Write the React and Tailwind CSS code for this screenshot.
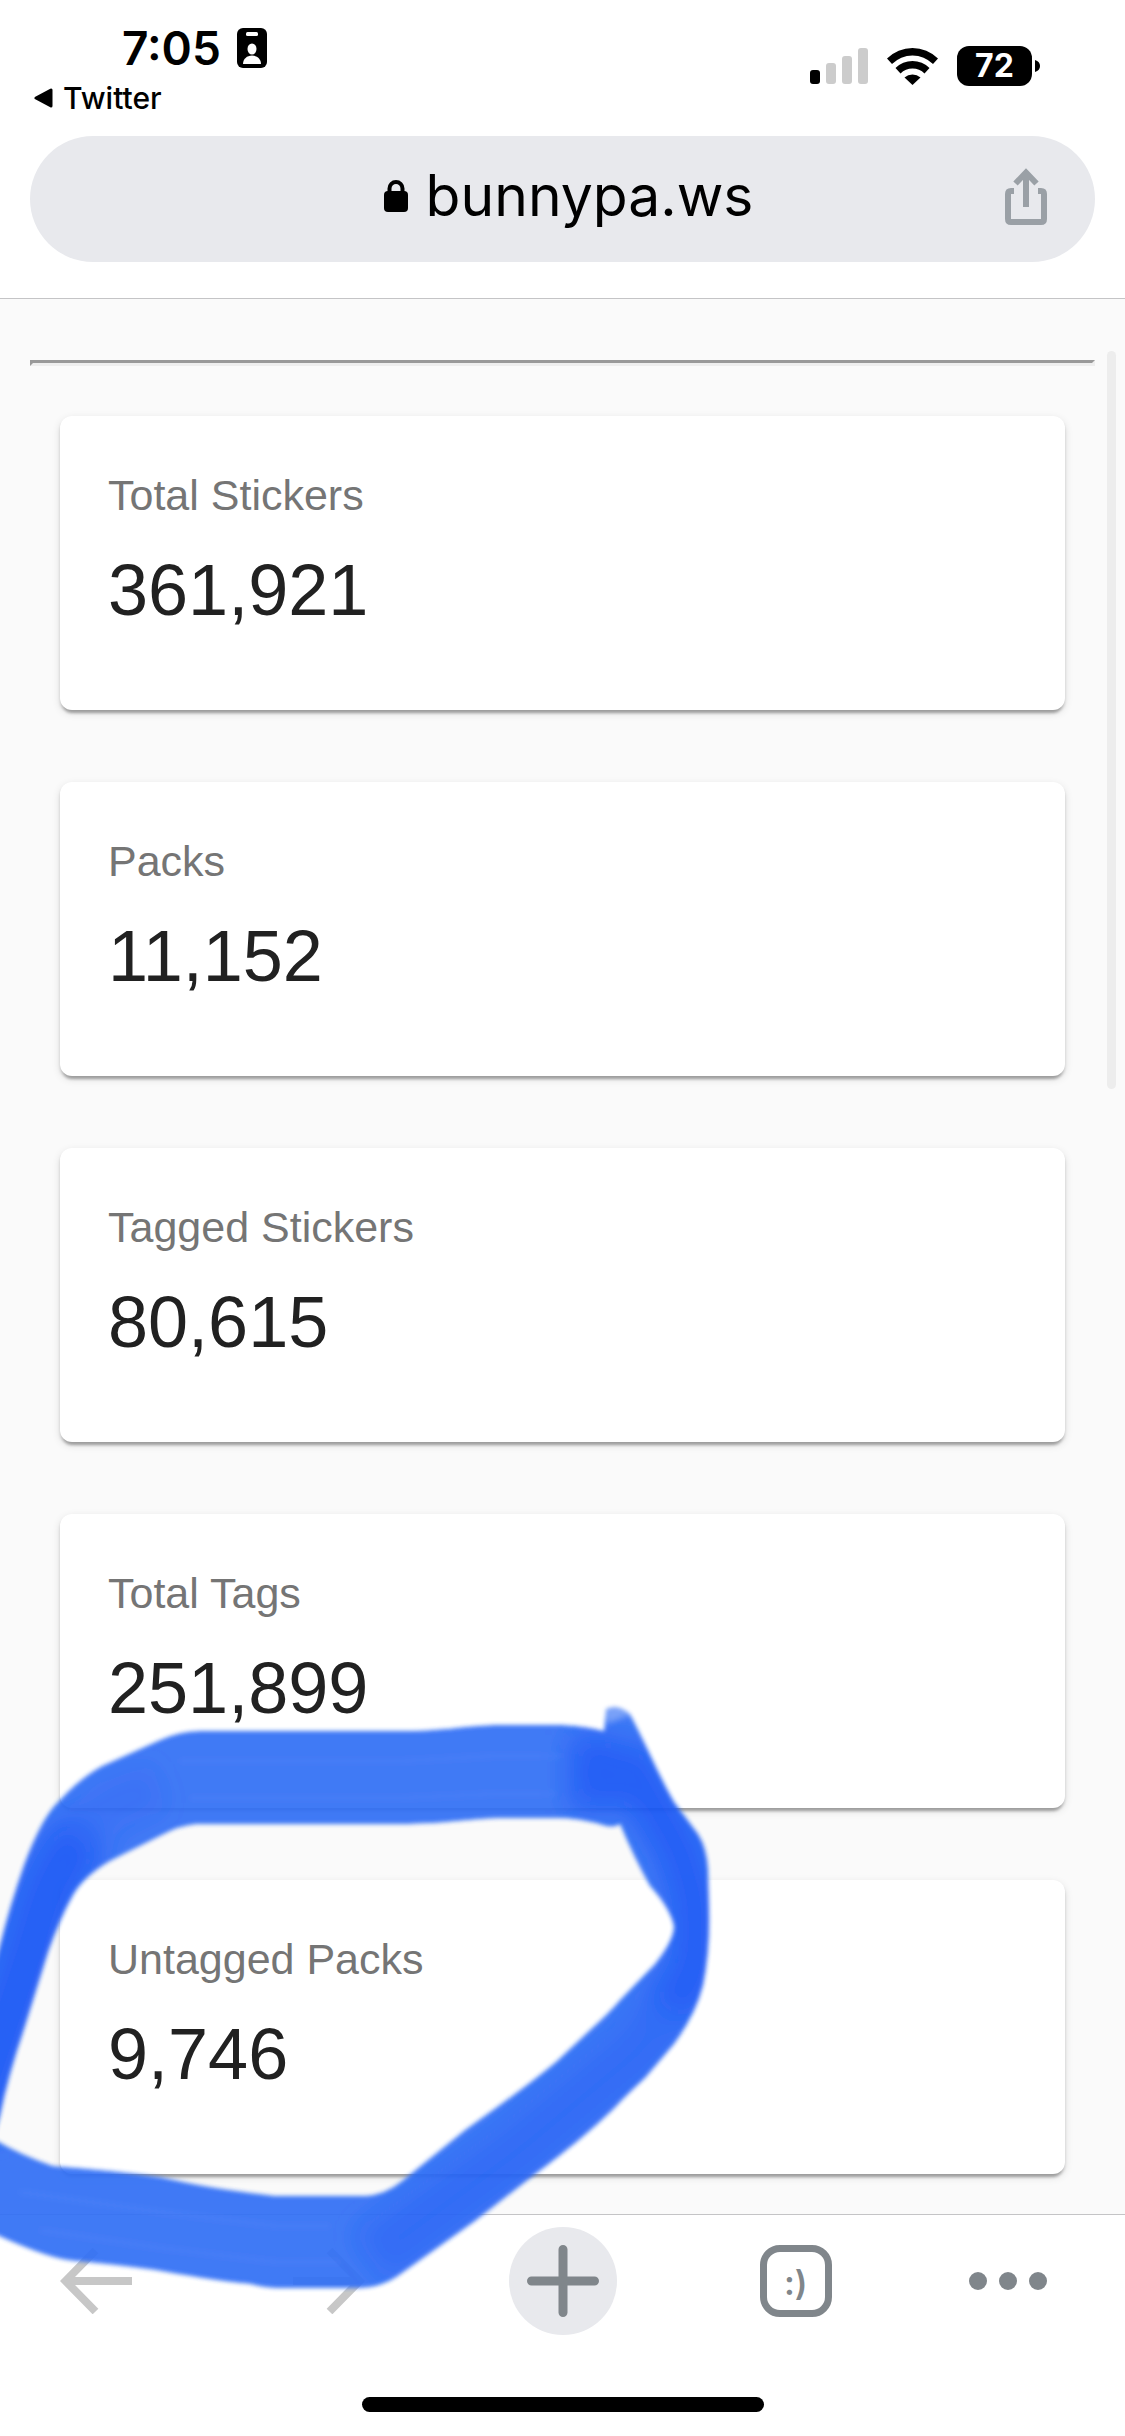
import React from "react";

const stats = [
  { label: "Total Stickers", value: "361,921" },
  { label: "Packs", value: "11,152" },
  { label: "Tagged Stickers", value: "80,615" },
  { label: "Total Tags", value: "251,899" },
  { label: "Untagged Packs", value: "9,746" },
];

function StatusBar() {
  return (
    <div className="flex h-[136px] justify-between pt-6 pr-[85px] pl-[34px]">
      <div className="flex flex-col">
        <div className="flex items-center gap-4 pl-[88px]">
          <span className="text-[46px] leading-[48px] font-semibold">7:05</span>
          <svg width="30" height="40" viewBox="0 0 30 40" aria-hidden="true">
            <rect width="30" height="40" rx="6" fill="#000" />
            <rect x="9" y="4" width="12" height="4" rx="1.5" fill="#fff" />
            <ellipse cx="15" cy="21" rx="4.5" ry="5.5" fill="#fff" />
            <path d="M6 36c0-5 4-8.500 9-8.500s9 3.500 9 8.500z" fill="#fff" />
          </svg>
        </div>
        <a href="#twitter" className="mt-2 flex items-center gap-2.5 text-[30px] leading-[36px] font-medium">
          <svg width="19" height="20" viewBox="0 0 19 20" aria-hidden="true">
            <path d="M17 2v16L2 10z" fill="#000" stroke="#000" strokeWidth="3" strokeLinejoin="round" />
          </svg>
          Twitter
        </a>
      </div>
      <div className="mt-[22px] flex h-10 items-center gap-[19px]">
        <svg width="58" height="36" viewBox="0 0 58 36" aria-hidden="true">
          <rect x="0" y="22" width="10" height="14" rx="3" fill="#000" />
          <rect x="16" y="15" width="10" height="21" rx="3" fill="#ccc" />
          <rect x="32" y="8" width="10" height="28" rx="3" fill="#ccc" />
          <rect x="48" y="0" width="10" height="36" rx="3" fill="#ccc" />
        </svg>
        <svg width="51" height="38" viewBox="0 0 51 38" aria-hidden="true">
          <path d="M0 11.500a36 36 0 0 1 51 0l-5 5.500a29 29 0 0 0-41 0z" />
          <path d="M8.500 21a24 24 0 0 1 34 0l-5 5.500a17 17 0 0 0-24 0z" />
          <path d="M17.500 30.500a12 12 0 0 1 16 0l-8 7.500z" />
        </svg>
        <div className="flex items-center gap-[3px]">
          <span className="flex h-10 w-[75px] items-center justify-center rounded-[12px] bg-black text-[32px] leading-10 font-bold text-white">72</span>
          <svg width="5" height="12" viewBox="0 0 5 12" aria-hidden="true">
            <path d="M0 0q5 1.500 5 6t-5 6z" />
          </svg>
        </div>
      </div>
    </div>
  );
}

function AddressBar() {
  return (
    <div className="mx-[30px] flex h-[126px] items-center rounded-full bg-[#e8e9ed] pr-12 pb-1.5">
      <button type="button" className="ml-[102px] flex flex-1 items-center justify-center gap-[18px] text-[57px] leading-[72px] text-black">
        <svg width="24" height="32" viewBox="0 0 24 32" aria-hidden="true">
          <rect x="0" y="11" width="24" height="21" rx="4" />
          <path d="M5.500 13V8.500a6.500 6.500 0 0 1 13 0V13" fill="none" stroke="#000" strokeWidth="4" />
        </svg>
        bunnypa.ws
      </button>
      <button type="button" aria-label="Share">
        <svg width="42" height="58" viewBox="0 0 42 58" fill="none" stroke="#9aa0a6" strokeWidth="6">
          <path d="M9 24H6q-3 0-3 3v25q0 3 3 3h30q3 0 3-3V27q0-3-3-3h-3" />
          <path d="M21 40V5M10.500 16.500L21 5.500l10.500 11" />
        </svg>
      </button>
    </div>
  );
}

function StatCard({ label, value }) {
  return (
    <section className="rounded-[12px] bg-white px-12 pt-[49px] pb-[72px] shadow-[0_6px_3px_-3px_rgba(0,0,0,0.2),0_3px_3px_0_rgba(0,0,0,0.14),0_3px_9px_0_rgba(0,0,0,0.12)]">
      <h2 className="text-[43px] leading-[60px] text-[#757575]">{label}</h2>
      <p className="mt-[17px] text-[72px] leading-[96px] text-[#212121]">{value}</p>
    </section>
  );
}

function Toolbar() {
  return (
    <nav className="border-t border-[#c4c4c6] bg-white pt-3 pb-6">
      <div className="flex items-center justify-between pr-[84px] pl-[42px]">
        <button type="button" aria-label="Back" className="flex size-[108px] items-center justify-center">
          <svg width="72" height="66" viewBox="0 0 72 66" fill="none" stroke="#c7c7c7" strokeWidth="8">
            <path d="M72 33H6M35.500 2.500L5.500 33l30 30.500" />
          </svg>
        </button>
        <button type="button" aria-label="Forward" className="flex size-[108px] items-center justify-center">
          <svg width="72" height="66" viewBox="0 0 72 66" fill="none" stroke="#c7c7c7" strokeWidth="8">
            <path d="M0 33h66M36.500 2.500L66.500 33l-30 30.500" />
          </svg>
        </button>
        <button type="button" aria-label="New tab" className="flex size-[108px] items-center justify-center rounded-full bg-[#e8e9ed]">
          <svg width="72" height="72" viewBox="0 0 72 72" stroke="#80868b" strokeWidth="9" strokeLinecap="round">
            <path d="M4.500 36h63M36 4.500v63" />
          </svg>
        </button>
        <button type="button" aria-label="Tabs" className="flex size-[108px] items-center justify-center">
          <span className="flex size-[72px] items-center justify-center rounded-[20px] border-[7px] border-[#80868b] pt-1 text-[34px] leading-[36px] font-semibold text-[#80868b]">:)</span>
        </button>
        <button type="button" aria-label="More" className="-mx-1.5 flex h-[108px] w-[78px] items-center justify-center">
          <svg width="78" height="18" viewBox="0 0 78 18" fill="#80868b">
            <circle cx="9" cy="9" r="9" />
            <circle cx="39" cy="9" r="9" />
            <circle cx="69" cy="9" r="9" />
          </svg>
        </button>
      </div>
      <div className="mx-auto mt-[62px] h-[15px] w-[402px] rounded-full bg-black" />
    </nav>
  );
}

function MarkerStroke() {
  const outline =
    "M606 1709Q618 1703 630 1714C646 1744 660 1778 674 1802L698 1834Q707 1848 708 1870L709 1911Q710 1950 703 1985Q696 2014 674 2044L645 2078Q634 2088 622 2100C600 2124 565 2152 538 2172L475 2221L402 2273Q382 2288 360 2288H276Q265 2288 250 2284C215 2281 185 2275 155 2270Q110 2264 75 2261Q50 2260 -10 2232V2137Q20 2155 53 2166Q110 2170 160 2177C200 2186 240 2192 276 2196H364Q385 2195 402 2181L465 2130Q530 2084 557 2061L590 2030Q610 2012 620 2000L655 1964Q674 1940 674 1926Q670 1908 650 1886Q634 1858 620 1824Q615 1828 606 1826Q580 1818 557 1818H500C460 1820 440 1824 402 1824H198Q180 1825 160 1836L110 1861Q84 1876 73 1895Q60 1918 48 1952L24 2029Q8 2076 0 2116L-10 2150V1980L0 1945Q10 1905 24 1865Q42 1816 60 1800Q80 1778 102 1766L160 1740Q180 1731 200 1731H402C440 1731 465 1726 494 1725H562Q585 1726 604 1731Q605 1720 606 1709Z";
  return (
    <svg className="pointer-events-none absolute bottom-0 left-0" width="760" height="746" viewBox="0 1690 760 746" aria-hidden="true">
      <defs>
        <clipPath id="marker-shape"><path d={outline} /></clipPath>
        <filter id="marker-shade" x="-20%" y="-20%" width="140%" height="140%"><feGaussianBlur stdDeviation="14" /></filter>
        <filter id="marker-edge" x="-5%" y="-5%" width="110%" height="110%"><feGaussianBlur stdDeviation="2" /></filter>
      </defs>
      <g filter="url(#marker-edge)" opacity="0.93">
        <g clipPath="url(#marker-shape)">
          <path d={outline} fill="#3370f5" />
          <g filter="url(#marker-shade)" fill="none" stroke="#1955f5" strokeLinejoin="round">
            <path d="M-30 2130L35 1935Q50 1870 85 1835" strokeWidth="60" />
            <path d="M70 1845L110 1805L160 1785" strokeWidth="50" strokeOpacity="0.3" />
            <path d="M595 1735V1810M622 1750L680 1850L695 1900V1970L670 2010" strokeWidth="50" />
            <path d="M690 1980L640 2050L520 2150L370 2260" strokeWidth="66" strokeOpacity="0.5" />
          </g>
          <g filter="url(#marker-edge)" fill="none" stroke="#4c84f7" strokeWidth="4" strokeOpacity="0.3">
            <path d="M180 1761H402L494 1756H560M190 1798H402L494 1794H555" />
            <path d="M20 2192L160 2212L276 2226H330M40 2230L160 2248L276 2262H340" />
          </g>
          <path d="M604 1704Q620 1696 632 1714L606 1724Z" fill="#fff" fillOpacity="0.3" filter="url(#marker-edge)" />
        </g>
      </g>
    </svg>
  );
}

export default function App() {
  return (
    <div className="relative min-h-screen overflow-hidden bg-white font-['Inter',sans-serif] text-black">
      <header className="border-b border-[#c4c4c6] pb-9">
        <StatusBar />
        <AddressBar />
      </header>
      <main className="relative bg-[#fafafa] px-[30px] pt-[61px] pb-10 font-['Liberation_Sans',Arial,sans-serif]">
        <hr className="h-[6px] border-[3px] border-t-[#999] border-r-[#eee] border-b-[#eee] border-l-[#999]" />
        <div className="mt-[50px] flex flex-col gap-[72px] px-[30px]">
          {stats.map((s) => (
            <StatCard key={s.label} label={s.label} value={s.value} />
          ))}
        </div>
        <div className="absolute top-[52px] right-[9px] h-[738px] w-[9px] rounded-full bg-[#ededed]" />
      </main>
      <Toolbar />
      <MarkerStroke />
    </div>
  );
}
